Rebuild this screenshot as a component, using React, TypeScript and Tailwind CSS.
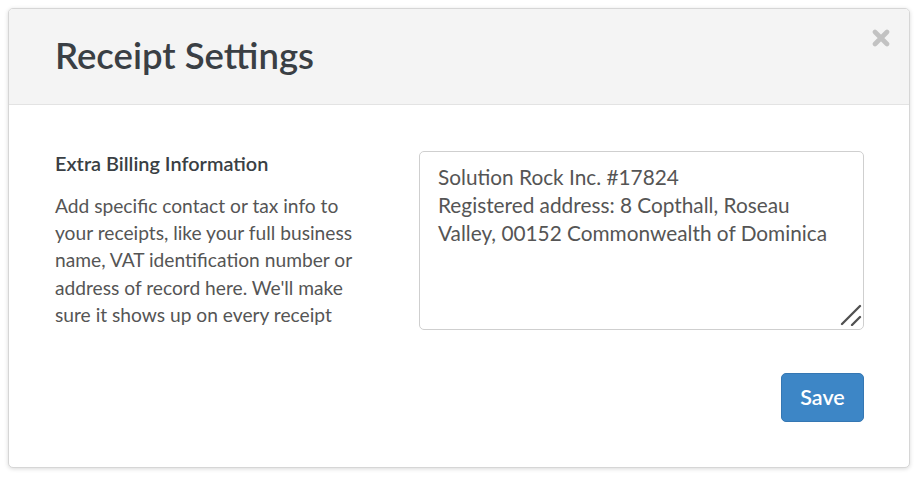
import React from 'react';

const text =
  'Solution Rock Inc. #17824\nRegistered address: 8 Copthall, Roseau Valley, 00152 Commonwealth of Dominica';

export default function App() {
  return (
    <div className="w-[922px] h-[480px] bg-white p-2" style={{ fontFamily: 'Lato, "Open Sans", sans-serif' }}>
      <div className="relative w-[902px] h-[460px] rounded-[5px] border border-[#d6d6d6] bg-white shadow-[0_1px_4px_rgba(0,0,0,0.15)] overflow-hidden">
        {/* Header */}
        <div className="h-[96px] bg-[#f4f4f4] border-b border-[#e3e3e3] flex items-center pl-[46px]">
          <h1 className="text-[36.5px] font-semibold text-[#3a3f44] leading-none pb-[2px]">Receipt Settings</h1>
        </div>
        <button className="absolute right-[19px] top-[20px] w-[18px] h-[18px] flex items-center justify-center">
          <svg viewBox="0 0 18 18" className="w-[18px] h-[18px]">
            <path d="M3 3 L15 15 M15 3 L3 15" stroke="#c2c2c2" strokeWidth="4.6" strokeLinecap="round" />
          </svg>
        </button>

        {/* Body */}
        <div className="flex pl-[46px] pr-[45px] pt-[46px]">
          <div className="w-[310px]">
            <h2 className="text-[19.9px] font-semibold text-[#3a3f44] leading-[22px] mt-[1px]">Extra Billing Information</h2>
            <p className="mt-[18px] text-[19.2px] leading-[27.2px] text-[#555]">
              Add specific contact or tax info to your receipts, like your full business name, VAT identification number or
              address of record here. We'll make sure it shows up on every receipt
            </p>
          </div>
          <div className="ml-auto w-[445px] flex flex-col items-end">
            <div className="relative">
              <textarea
                defaultValue={text}
                className="block w-[445px] h-[179px] rounded-[5px] border border-[#cfcfcf] px-[18px] py-[11px] text-[20.8px] leading-[28px] text-[#555] outline-none resize-none"
                style={{ fontFamily: 'Lato, "Open Sans", sans-serif' }}
              />
              <svg className="absolute right-[2px] bottom-[4px] w-[22px] h-[22px] pointer-events-none" viewBox="0 0 22 22">
                <path d="M2 20 L20 2 M12 21 L20 13" stroke="#505050" strokeWidth="2.3" strokeLinecap="round" />
              </svg>
            </div>
            <button className="mt-[43px] w-[83px] h-[49px] rounded-[5px] bg-[#3d86c6] border border-[#3577b3] text-white text-[21.5px] font-semibold">
              Save
            </button>
          </div>
        </div>
      </div>
    </div>
  );
}
